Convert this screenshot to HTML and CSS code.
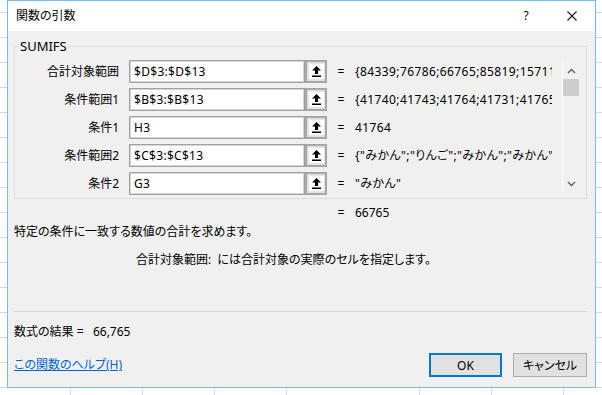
FILE: index.html
```html
<!DOCTYPE html>
<html lang="ja">
<head>
    <meta charset="UTF-8">
    <title>関数の引数</title>
    <link rel="stylesheet" href="styles.css">
</head>
<body>

<div class="dialog">
    <div class="titlebar">
        <span class="title">関数の引数</span>
        <span class="help-btn">?</span>
        <span class="close-btn">
            <svg width="10" height="10" viewBox="0 0 10 10"><path d="M0.5 0.5 L9.5 9.5 M9.5 0.5 L0.5 9.5" stroke="#1a1a1a" stroke-width="1.1" fill="none"/></svg>
        </span>
    </div>

    <div class="content">
        <fieldset class="func-box">
            <legend>SUMIFS</legend>
            <div class="args-wrap">
                <div class="args">
                    <label>合計対象範囲</label>
                    <div class="ref"><span class="ref-input">$D$3:$D$13</span><span class="ref-btn"><span class="ref-icon"><svg width="9" height="11" viewBox="0 0 9 11"><path d="M4.5 0 L9 4.5 H6 V8 H3 V4.5 H0 Z" fill="#000"/><rect x="0" y="9.5" width="9" height="1.5" fill="#000"/></svg></span></span></div>
                    <span class="eq">=</span>
                    <span class="val">{84339;76786;66765;85819;157113;93210}</span>

                    <label>条件範囲1</label>
                    <div class="ref"><span class="ref-input">$B$3:$B$13</span><span class="ref-btn"><span class="ref-icon"><svg width="9" height="11" viewBox="0 0 9 11"><path d="M4.5 0 L9 4.5 H6 V8 H3 V4.5 H0 Z" fill="#000"/><rect x="0" y="9.5" width="9" height="1.5" fill="#000"/></svg></span></span></div>
                    <span class="eq">=</span>
                    <span class="val">{41740;41743;41764;41731;41765;41770}</span>

                    <label>条件1</label>
                    <div class="ref"><span class="ref-input">H3</span><span class="ref-btn"><span class="ref-icon"><svg width="9" height="11" viewBox="0 0 9 11"><path d="M4.5 0 L9 4.5 H6 V8 H3 V4.5 H0 Z" fill="#000"/><rect x="0" y="9.5" width="9" height="1.5" fill="#000"/></svg></span></span></div>
                    <span class="eq">=</span>
                    <span class="val">41764</span>

                    <label>条件範囲2</label>
                    <div class="ref"><span class="ref-input">$C$3:$C$13</span><span class="ref-btn"><span class="ref-icon"><svg width="9" height="11" viewBox="0 0 9 11"><path d="M4.5 0 L9 4.5 H6 V8 H3 V4.5 H0 Z" fill="#000"/><rect x="0" y="9.5" width="9" height="1.5" fill="#000"/></svg></span></span></div>
                    <span class="eq">=</span>
                    <span class="val">{"みかん";"りんご";"みかん";"みかん";"バナナ"}</span>

                    <label>条件2</label>
                    <div class="ref"><span class="ref-input">G3</span><span class="ref-btn"><span class="ref-icon"><svg width="9" height="11" viewBox="0 0 9 11"><path d="M4.5 0 L9 4.5 H6 V8 H3 V4.5 H0 Z" fill="#000"/><rect x="0" y="9.5" width="9" height="1.5" fill="#000"/></svg></span></span></div>
                    <span class="eq">=</span>
                    <span class="val">"みかん"</span>
                </div>

                <div class="scrollbar">
                    <span class="scroll-arrow"><svg width="9" height="6" viewBox="0 0 9 6"><polyline points="1,5 4.5,1.5 8,5" stroke="#606060" stroke-width="1.4" fill="none"/></svg></span>
                    <span class="scroll-thumb"></span>
                    <span class="scroll-space"></span>
                    <span class="scroll-arrow"><svg width="9" height="6" viewBox="0 0 9 6"><polyline points="1,1 4.5,4.5 8,1" stroke="#606060" stroke-width="1.4" fill="none"/></svg></span>
                </div>
            </div>
        </fieldset>

        <div class="total">
            <span class="eq">=</span>
            <span>66765</span>
        </div>

        <div class="desc">特定の条件に一致する数値の合計を求めます。</div>
        <div class="arg-desc">合計対象範囲:&nbsp;&nbsp;には合計対象の実際のセルを指定します。</div>

        <div class="separator"></div>

        <div class="result">数式の結果 =&nbsp;&nbsp;&nbsp;66,765</div>

        <div class="footer">
            <a class="help-link" href="#">この関数のヘルプ(H)</a>
            <button class="btn btn-ok">OK</button>
            <button class="btn btn-cancel">キャンセル</button>
        </div>
    </div>
</div>

<div class="sheet-strip">
    <span class="cell cell-first"></span>
    <span class="cell"></span>
    <span class="cell"></span>
    <span class="cell"></span>
    <span class="cell cell-wide"></span>
    <span class="cell"></span>
    <span class="cell"></span>
    <span class="cell cell-last"></span>
</div>

</body>
</html>
```

FILE: styles.css
```css
body {
    margin: 0;
    font-family: "Noto Sans", "Noto Sans CJK JP", sans-serif;
    font-size: 12px;
    font-feature-settings: "palt";
    color: #000000;
    background-color: #ffffff;
    background-image: repeating-linear-gradient(#ffffff 0 12px, #d9d9d9 12px 13px, #ffffff 13px 25px);
    overflow: hidden;
}

.dialog {
    box-sizing: border-box;
    width: 589px;
    margin-left: 7px;
    border: 1px solid #7fb9ea;
    background-color: #f0f0f0;
}

.titlebar {
    height: 30px;
    background-color: #ffffff;
    display: flex;
    align-items: center;
}

.title {
    padding-left: 8px;
    font-size: 12px;
    line-height: 16px;
}

.help-btn {
    margin-left: auto;
    width: 44px;
    text-align: center;
    font-size: 12px;
    line-height: 16px;
}

.close-btn {
    width: 47px;
    height: 30px;
    display: flex;
    align-items: center;
    justify-content: center;
}

.content {
    padding: 0 0 10px 0;
}

.func-box {
    margin: 7px 8px 0 6px;
    padding: 6px 0 3px 0;
    border: 1px solid #dcdcdc;
    min-width: 0;
}

.func-box legend {
    margin-left: 4px;
    padding: 0 1px;
    font-size: 13px;
    line-height: 16px;
}

.args-wrap {
    display: flex;
}

.args {
    display: grid;
    grid-template-columns: 114px 198px 28px 197px;
    grid-auto-rows: 23px;
    row-gap: 5px;
    align-items: center;
}

.args label {
    text-align: right;
    padding-right: 10px;
    line-height: 16px;
}

.ref {
    display: flex;
    height: 23px;
}

.ref-input {
    box-sizing: border-box;
    width: 176px;
    height: 23px;
    padding-left: 4px;
    border: 1px solid #a0a0a0;
    box-shadow: inset 0 0 0 1px #d6d6d6;
    background-color: #ffffff;
    line-height: 21px;
    letter-spacing: 0.3px;
}

.ref-btn {
    box-sizing: border-box;
    width: 22px;
    height: 23px;
    border: 2px solid #a6a6a6;
    background-color: #e3e3e3;
    display: flex;
    align-items: center;
    justify-content: center;
}

.ref-icon {
    width: 15px;
    height: 15px;
    background-color: #ffffff;
    display: flex;
    align-items: center;
    justify-content: center;
}

.eq {
    text-align: center;
    width: 28px;
}

.val {
    white-space: nowrap;
    overflow: hidden;
    line-height: 16px;
    letter-spacing: 0.4px;
}

.scrollbar {
    box-sizing: border-box;
    width: 17px;
    height: 130px;
    margin: 2px 0 0 10px;
    border-left: 1px solid #ffffff;
    display: flex;
    flex-direction: column;
}

.scroll-arrow {
    height: 17px;
    display: flex;
    align-items: center;
    justify-content: center;
}

.scroll-thumb {
    height: 17px;
    background-color: #cdcdcd;
}

.scroll-space {
    flex: 1;
}

.total {
    display: flex;
    margin-top: 6px;
    padding-left: 319px;
    line-height: 16px;
}

.desc {
    margin-top: 3px;
    padding-left: 6px;
    line-height: 16px;
}

.arg-desc {
    margin-top: 12px;
    padding-left: 128px;
    line-height: 16px;
}

.separator {
    height: 1px;
    margin: 43px 8px 0 6px;
    background-color: #d7d7d7;
}

.result {
    margin-top: 12px;
    padding-left: 6px;
    line-height: 16px;
}

.footer {
    display: flex;
    align-items: center;
    height: 24px;
    margin-top: 13px;
    padding: 0 8px 0 6px;
}

.help-link {
    color: #0066cc;
    text-decoration: underline;
    line-height: 16px;
}

.btn {
    box-sizing: border-box;
    height: 24px;
    padding: 0;
    font-family: "Noto Sans", "Noto Sans CJK JP", sans-serif;
    font-size: 12px;
    font-feature-settings: "palt";
    color: #000000;
    background-color: #e1e1e1;
}

.btn-ok {
    margin-left: auto;
    width: 73px;
    border: 2px solid #0078d7;
}

.btn-cancel {
    margin-left: 11px;
    width: 74px;
    border: 1px solid #adadad;
}

.sheet-strip {
    display: flex;
    height: 7px;
}

.cell {
    box-sizing: border-box;
    width: 72px;
    border-left: 1px solid #d9d9d9;
}

.cell-first {
    width: 70px;
    border-left: none;
}

.cell-wide {
    width: 133px;
}

.cell-last {
    flex: 1;
}
```
